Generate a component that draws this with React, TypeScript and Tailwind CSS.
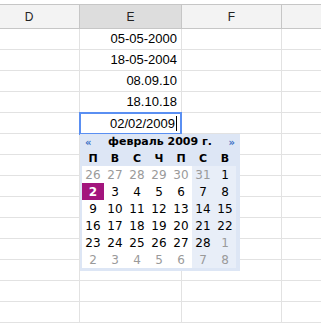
const ROWS = 14
const values: Record<number, string> = {
  0: "05-05-2000",
  1: "18-05-2004",
  2: "08.09.10",
  3: "18.10.18",
}

const dayNames = ["П", "В", "С", "Ч", "П", "С", "В"]

type Day = { n: number; muted?: boolean; selected?: boolean }

const weeks: Day[][] = [
  [26, 27, 28, 29, 30, 31].map((n) => ({ n, muted: true })).concat([{ n: 1 }]),
  [2, 3, 4, 5, 6, 7, 8].map((n) => ({ n, selected: n === 2 })),
  [9, 10, 11, 12, 13, 14, 15].map((n) => ({ n })),
  [16, 17, 18, 19, 20, 21, 22].map((n) => ({ n })),
  [23, 24, 25, 26, 27, 28].map((n) => ({ n } as Day)).concat([{ n: 1, muted: true }]),
  [2, 3, 4, 5, 6, 7, 8].map((n) => ({ n, muted: true })),
]

function DatePicker() {
  return (
    <div className="absolute left-[80px] top-[134px] w-[160px] h-[137px] bg-[#dde6f5] px-[2px] font-['DejaVu_Sans',sans-serif] text-black">
      <div className="flex h-[17px] items-center px-[3px] text-[11px] font-bold">
        <span className="flex-1 text-left text-[10px] text-[#3a6fc4]">«</span>
        <span className="text-center">февраль 2009 г.</span>
        <span className="flex-1 text-right text-[10px] text-[#3a6fc4]">»</span>
      </div>
      <div className="grid h-[15px] w-[154px] grid-cols-7 items-center text-[11px] font-bold">
        {dayNames.map((d, i) => (
          <span key={i} className="text-center">
            {d}
          </span>
        ))}
      </div>
      <div className="grid w-[154px] grid-cols-7 text-[12px]">
        {weeks.flat().map((d, i) => {
          const weekend = i % 7 >= 5
          return (
            <div
              key={i}
              className={`flex h-[17px] items-center justify-center ${
                d.selected ? "bg-[#a3157d] font-bold text-white" : weekend ? "bg-[#e8eef8]" : "bg-white"
              } ${d.muted ? "text-[#9a9a9a]" : ""}`}
            >
              {d.n}
            </div>
          )
        })}
      </div>
    </div>
  )
}

export default function App() {
  return (
    <div className="relative h-[325px] w-[321px] overflow-hidden bg-white pt-[4px] font-['Liberation_Sans',Arial,sans-serif]">
      <div className="-ml-[21px] grid w-[342px] grid-cols-[101px_102px_100px_1fr]">
        <div className="flex h-[25px] items-center justify-center border-y border-r border-[#c6c6c6] bg-[#f3f3f3] text-[12px] text-[#222]">
          D
        </div>
        <div className="flex h-[25px] items-center justify-center border-y border-r border-[#c6c6c6] bg-[#dddddd] text-[12px] text-[#222]">
          E
        </div>
        <div className="flex h-[25px] items-center justify-center border-y border-r border-[#c6c6c6] bg-[#f3f3f3] text-[12px] text-[#222]">
          F
        </div>
        <div className="h-[25px] border-y border-[#c6c6c6] bg-[#f3f3f3]" />
        {Array.from({ length: ROWS }).map((_, r) => (
          <div key={r} className="contents">
            <div className="h-[21px] border-b border-r border-[#e2e2e2]" />
            <div className="flex h-[21px] items-center justify-end border-b border-r border-[#e2e2e2] pr-[4px] text-[13px] text-black">
              {values[r] ?? ""}
            </div>
            <div className="h-[21px] border-b border-r border-[#e2e2e2]" />
            <div className="h-[21px] border-b border-[#e2e2e2]" />
          </div>
        ))}
      </div>

      <div className="absolute left-[79px] top-[112px] flex h-[23px] w-[103px] items-center justify-end border-2 border-[#5a8ff2] bg-white pr-[3px] text-[13px] text-black">
        <span>02/02/2009</span>
        <span className="ml-[1px] h-[15px] w-px bg-black" />
      </div>

      <DatePicker />
    </div>
  )
}
